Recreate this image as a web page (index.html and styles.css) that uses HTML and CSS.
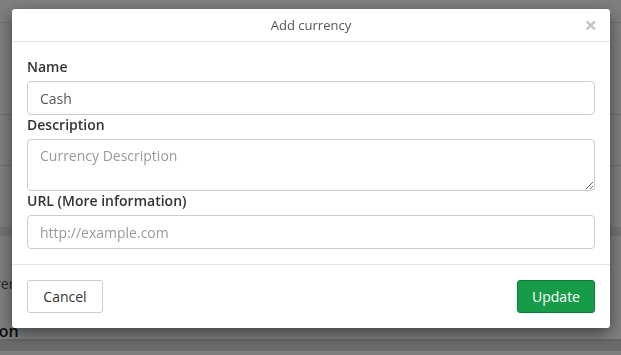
FILE: index.html
```html
<!DOCTYPE html>
<html lang="en">
<head>
<meta charset="UTF-8" />
<meta name="viewport" content="width=device-width, initial-scale=1" />
<title>Currencies</title>
<link rel="stylesheet" href="styles.css">
</head>
<body>
  <!-- Page behind the modal -->
  <div class="page">
    <div class="row row-top"></div>
    <div class="row row-a"></div>
    <div class="row row-b"></div>
    <div class="band"></div>
    <div class="row row-text">Currency</div>
    <div class="row row-title">Description</div>
    <div class="row-last"></div>
  </div>

  <div class="backdrop"></div>

  <!-- Modal -->
  <div class="modal">
    <div class="modal-header">
      <h4 class="modal-title">Add currency</h4>
      <span class="close">&times;</span>
    </div>
    <div class="modal-body">
      <label for="name">Name</label>
      <input type="text" id="name" value="Cash" />
      <label for="desc">Description</label>
      <textarea id="desc" placeholder="Currency Description"></textarea>
      <label for="url">URL (More information)</label>
      <input type="text" id="url" placeholder="http://example.com" />
    </div>
    <div class="modal-footer">
      <button class="btn btn-default">Cancel</button>
      <button class="btn btn-success">Update</button>
    </div>
  </div>
</body>
</html>
```

FILE: styles.css
```css
html, body {
  margin: 0;
  padding: 0;
  height: 100%;
  font-family: "Open Sans", Arial, sans-serif;
  background: #fff;
  color: #333;
  overflow: hidden;
}
/* Pagina de fondo */
.page {
  height: 100%;
}
.row {
  border-bottom: 1px solid #ddd;
  box-sizing: border-box;
}
.row-top { height: 23px; }
.row-a { height: 92px; }
.row-b { height: 51px; }
.band {
  margin-top: 61px;
  height: 9px;
  background: #e8e8e8;
}
.row-text {
  border: none;
  margin-top: 38px;
  margin-left: -28px;
  font-size: 14px;
  color: #555;
}
.row-title {
  margin-top: 27px;
  margin-left: -70px;
  font-size: 16px;
  font-weight: 600;
  color: #222;
  height: 21px;
  border-bottom: 2px solid #ccc;
}
.row-last {
  height: 10px;
  background: #d6d6d6;
}
.backdrop {
  position: fixed;
  top: 0; left: 0; right: 0; bottom: 0;
  background: rgba(0,0,0,0.5);
}
/* Modal */
.modal {
  position: fixed;
  top: 9px;
  left: 12px;
  width: 598px;
  background: #fff;
  border-radius: 3px;
  box-shadow: 0 5px 15px rgba(0,0,0,0.5);
}
.modal-header {
  height: 32px;
  border-bottom: 1px solid #e5e5e5;
  display: flex;
  align-items: center;
  justify-content: center;
  position: relative;
}
.modal-title {
  margin: 0;
  font-size: 13px;
  font-weight: 400;
  color: #555;
}
.close {
  position: absolute;
  right: 13px;
  top: 4px;
  font-size: 22px;
  font-weight: 700;
  line-height: 1;
  color: #c4c4c4;
}
.modal-body {
  padding: 15px 15px 15px;
}
label {
  display: block;
  font-size: 14px;
  font-weight: 600;
  line-height: 19px;
  margin-bottom: 5px;
  color: #333;
}
input[type=text], textarea {
  display: block;
  width: 100%;
  height: 34px;
  padding: 6px 12px;
  border: 1px solid #ccc;
  border-radius: 4px;
  box-sizing: border-box;
  font-family: inherit;
  font-size: 14px;
  color: #555;
  margin: 0;
}
textarea {
  height: 52px;
  resize: vertical;
}
::placeholder {
  color: #999;
}
.modal-footer {
  border-top: 1px solid #e5e5e5;
  padding: 15px;
  display: flex;
  justify-content: space-between;
}
.btn {
  height: 33px;
  padding: 0 12px;
  font-family: inherit;
  font-size: 14px;
  border-radius: 3px;
  cursor: pointer;
}
.btn-default {
  background: #fff;
  color: #333;
  border: 1px solid #ccc;
  width: 76px;
}
.btn-success {
  background: #169c49;
  color: #fff;
  border: 1px solid #0f7d3a;
  width: 78px;
}
```
